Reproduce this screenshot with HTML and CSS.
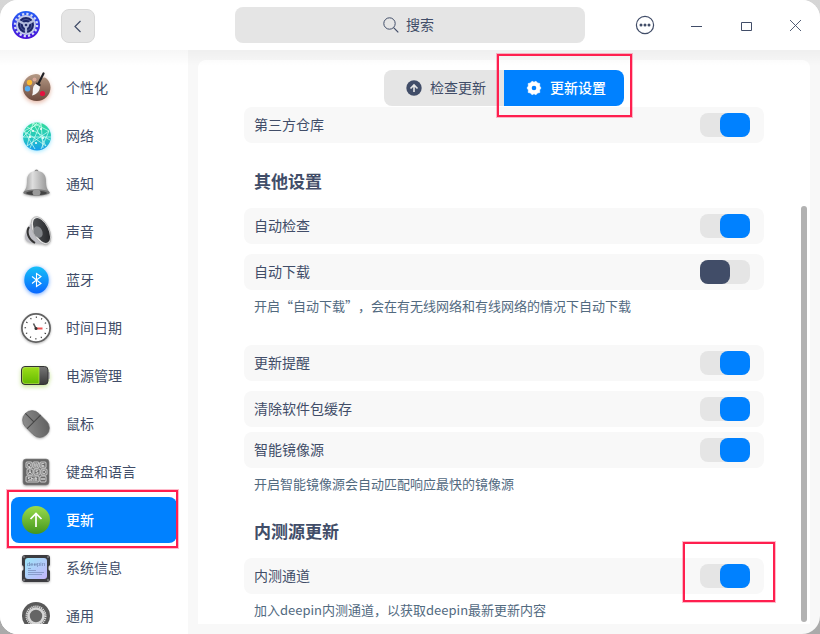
FILE: index.html
```html
<!DOCTYPE html>
<html lang="zh-CN">
<head>
    <meta charset="UTF-8">
    <meta name="viewport" content="width=device-width, initial-scale=1.0">
    <title>控制中心</title>
    <link rel="stylesheet" href="styles.css">
</head>
<body>
    <div class="window">
        <header class="titlebar">
            <div class="titlebar-left">
                <svg class="logo" viewBox="0 0 28 28" aria-hidden="true">
                    <defs>
                        <linearGradient id="logoBlue" x1="0" y1="0" x2="0" y2="1"><stop offset="0" stop-color="#2460f5"/><stop offset="1" stop-color="#4a10d8"/></linearGradient>
                    </defs>
                    <circle cx="14" cy="14" r="14" fill="url(#logoBlue)"/>
                    <circle cx="14" cy="14" r="11" fill="none" stroke="#d5dcf5" stroke-width="2.4" stroke-dasharray="2.2 2.12"/>
                    <circle cx="14" cy="14" r="9" fill="#1c2568" stroke="#c3cbec" stroke-width="2"/>
                    <circle cx="14" cy="14" r="5.6" fill="none" stroke="#4a5593" stroke-width="1"/>
                    <path d="M14 14L6 9.5M14 14L22 9.5M14 14V23" stroke="#b3bbdc" stroke-width="2.2"/>
                    <circle cx="14" cy="14" r="3" fill="#b3bbdc"/>
                    <circle cx="14" cy="14" r="1.3" fill="#28306e"/>
                </svg>
                <button class="back-btn" type="button" aria-label="返回">
                    <svg width="16" height="16" viewBox="0 0 16 16"><path d="M10.500 3L5 8.500L10.500 14" fill="none" stroke="#414d68" stroke-width="1.2"/></svg>
                </button>
            </div>
            <label class="search">
                <svg width="16" height="16" viewBox="0 0 16 16" aria-hidden="true"><circle cx="6.500" cy="6.500" r="5.700" fill="none" stroke="#414d68"/><path d="M10.600 10.600L15.300 15.300" stroke="#414d68" stroke-width="1.200"/></svg>
                <input type="text" placeholder="搜索" aria-label="搜索">
            </label>
            <div class="titlebar-right">
                <button type="button" aria-label="菜单">
                    <svg width="20" height="20" viewBox="0 0 20 20"><circle cx="10" cy="10" r="8.600" fill="none" stroke="#414d68" stroke-width="1.200"/><g fill="#414d68"><circle cx="6" cy="10" r="1.500"/><circle cx="10" cy="10" r="1.500"/><circle cx="14" cy="10" r="1.500"/></g></svg>
                </button>
                <button type="button" aria-label="最小化">
                    <svg width="14" height="14" viewBox="0 0 14 14"><path d="M3 8.500H14" stroke="#414d68"/></svg>
                </button>
                <button type="button" aria-label="最大化">
                    <svg width="14" height="14" viewBox="0 0 14 14"><path d="M3.500 4.500H13.500V12.500H3.500Z" fill="none" stroke="#414d68"/></svg>
                </button>
                <button type="button" aria-label="关闭">
                    <svg width="14" height="14" viewBox="0 0 14 14"><path d="M2 2L13 13M13 2L2 13" stroke="#414d68" stroke-width="0.9"/></svg>
                </button>
            </div>
        </header>

        <div class="content">
            <nav class="sidebar">
                <a class="nav-item" href="#personalization">
                    <svg class="nav-icon shadow-brown" viewBox="0 0 30 30">
                        <defs><linearGradient id="palette" x1="0" y1="0" x2="0" y2="1"><stop offset="0" stop-color="#b59a86"/><stop offset="1" stop-color="#6c4a3d"/></linearGradient></defs>
                        <path d="M15 1C22 1 17 6 22 5C25 3 29.500 9 29.500 14.500A13.800 13.500 0 1 1 15 1Z" fill="url(#palette)"/>
                        <circle cx="8.500" cy="9.500" r="2.700" fill="#f9b934"/>
                        <circle cx="13.500" cy="6.500" r="2" fill="#d9a99b"/>
                        <circle cx="6.500" cy="15.700" r="2.700" fill="#55adf2"/>
                        <circle cx="21.500" cy="20.500" r="2.600" fill="#e3123f"/>
                        <path d="M22.500 0.500L17 11.500" stroke="#202024" stroke-width="2.200" stroke-linecap="round"/>
                        <path d="M15 10.500L19 13C19 18 16 21.500 11 22.500C13 19 10 14 15 10.500Z" fill="#f3f3f3"/>
                        <path d="M15.200 10L19.500 12.700" stroke="#29292c" stroke-width="2"/>
                    </svg>
                    <span>个性化</span>
                </a>
                <a class="nav-item" href="#network">
                    <svg class="nav-icon shadow-cyan" viewBox="0 0 30 30">
                        <defs><linearGradient id="globe" x1="0" y1="0" x2="0" y2="1"><stop offset="0" stop-color="#32dc9a"/><stop offset="0.6" stop-color="#24c4c4"/><stop offset="1" stop-color="#169ced"/></linearGradient></defs>
                        <circle cx="16" cy="15.500" r="14" fill="url(#globe)"/>
                        <path d="M12 2L6 25M12 2L25 25M12 2L28 10M20 2L3 10M20 2L9 27M20 2L22 27M3 10L25 25M3 10L14 28M2 16H30M28 10L6 25M28 10L20 28M6 6L29 19M16 2L2 16" fill="none" stroke="#d4fff3" stroke-width="0.7"/>
                        <g fill="#fff"><circle cx="12" cy="10" r="1"/><circle cx="20" cy="8" r="1"/><circle cx="22" cy="17" r="1"/><circle cx="9" cy="16" r="1"/><circle cx="15" cy="22" r="1"/></g>
                    </svg>
                    <span>网络</span>
                </a>
                <a class="nav-item" href="#notification">
                    <svg class="nav-icon shadow-gray" viewBox="0 0 30 30">
                        <defs><linearGradient id="bell" x1="0" y1="0" x2="1" y2="0"><stop offset="0" stop-color="#929292"/><stop offset="0.35" stop-color="#dedede"/><stop offset="1" stop-color="#8c8c8c"/></linearGradient></defs>
                        <circle cx="15.500" cy="2.500" r="2" fill="#8c8c8c"/>
                        <path d="M15.500 2C22 2 25 6 25 11.500C25 18 26 20 28.500 23V24.500H2.500V23C5 20 6 18 6 11.500C6 6 9 2 15.500 2Z" fill="url(#bell)"/>
                        <ellipse cx="15.500" cy="23.500" rx="13" ry="3.200" fill="#777"/>
                        <ellipse cx="15.500" cy="24" rx="10.500" ry="2.200" fill="#434343"/>
                        <ellipse cx="15.500" cy="23.600" rx="4" ry="3.200" fill="#9a9a9a"/>
                    </svg>
                    <span>通知</span>
                </a>
                <a class="nav-item" href="#sound">
                    <svg class="nav-icon shadow-gray" viewBox="0 0 30 30">
                        <defs><linearGradient id="cone" x1="0" y1="0" x2="1" y2="1"><stop offset="0" stop-color="#55585b"/><stop offset="1" stop-color="#202124"/></linearGradient></defs>
                        <path d="M6 12L4 18C3 23 7 26 12 26L22 27L12 4Z" fill="#bdbdc3"/>
                        <path d="M8 10C5 15 7 22 14 26" fill="none" stroke="#333" stroke-width="2"/>
                        <ellipse cx="20" cy="13.500" rx="8" ry="15" transform="rotate(-27 20 13.500)" fill="#e8e8e8" stroke="#a2a2a2" stroke-width="0.600"/>
                        <ellipse cx="20.500" cy="13.500" rx="6.700" ry="13.500" transform="rotate(-27 20.500 13.500)" fill="url(#cone)"/>
                        <ellipse cx="17" cy="15" rx="4.300" ry="6" transform="rotate(-27 17 15)" fill="#808387"/>
                    </svg>
                    <span>声音</span>
                </a>
                <a class="nav-item" href="#bluetooth">
                    <svg class="nav-icon shadow-blue" viewBox="0 0 30 30">
                        <defs><linearGradient id="bt" x1="0" y1="0" x2="0" y2="1"><stop offset="0" stop-color="#14bff8"/><stop offset="1" stop-color="#0968ff"/></linearGradient></defs>
                        <ellipse cx="15.500" cy="15" rx="12.200" ry="13.400" fill="url(#bt)"/>
                        <path d="M11 11.500L20 18.500L15.500 21.500V8.500L20 11.500L11 18.500" fill="none" stroke="#fff" stroke-width="1.100"/>
                    </svg>
                    <span>蓝牙</span>
                </a>
                <a class="nav-item" href="#datetime">
                    <svg class="nav-icon shadow-gray" viewBox="0 0 30 30">
                        <circle cx="15" cy="15" r="14.100" fill="#fff" stroke="#626262" stroke-width="1.700"/>
                        <circle cx="15" cy="15" r="10.700" fill="none" stroke="#333" stroke-width="1.500" stroke-dasharray="1 4.602" stroke-dashoffset="0.500"/>
                        <path d="M15 15.500H21.500" stroke="#f05252" stroke-width="2"/>
                        <path d="M12.500 10.500L15 15.500" stroke="#555" stroke-width="1.600"/>
                        <circle cx="15" cy="15.500" r="1.500" fill="#333"/>
                    </svg>
                    <span>时间日期</span>
                </a>
                <a class="nav-item" href="#power">
                    <svg class="nav-icon shadow-green" viewBox="0 0 30 30">
                        <defs>
                            <linearGradient id="charge" x1="0" y1="0" x2="0" y2="1"><stop offset="0" stop-color="#9bdd19"/><stop offset="1" stop-color="#65bb00"/></linearGradient>
                            <linearGradient id="battery" x1="0" y1="0" x2="0" y2="1"><stop offset="0" stop-color="#777"/><stop offset="1" stop-color="#393939"/></linearGradient>
                        </defs>
                        <rect x="26" y="11" width="3" height="7" rx="1" fill="#bbb"/>
                        <rect x="0.500" y="5.500" width="26.500" height="18" rx="3.500" fill="url(#battery)" stroke="#333"/>
                        <path d="M4 6.500H18V22.500H4Q1.500 22.500 1.500 20V9Q1.500 6.500 4 6.500Z" fill="url(#charge)" stroke="#b8ee45" stroke-width="0.700"/>
                    </svg>
                    <span>电源管理</span>
                </a>
                <a class="nav-item" href="#mouse">
                    <svg class="nav-icon shadow-gray" viewBox="0 0 30 30">
                        <defs><linearGradient id="mouse" x1="0" y1="0" x2="1" y2="1"><stop offset="0" stop-color="#929292"/><stop offset="1" stop-color="#5b5b5b"/></linearGradient></defs>
                        <g transform="rotate(-45 15 15)">
                            <rect x="5.500" y="0" width="19" height="30" rx="9.500" fill="url(#mouse)" stroke="#666" stroke-width="0.600"/>
                            <path d="M5.500 12H24.500M15 12V0" fill="none" stroke="#454545" stroke-width="1"/>
                        </g>
                    </svg>
                    <span>鼠标</span>
                </a>
                <a class="nav-item" href="#keyboard">
                    <svg class="nav-icon shadow-gray" viewBox="0 0 30 30">
                        <rect x="2" y="2" width="26" height="26" rx="3" fill="#666" stroke="#858585" stroke-width="0.600"/>
                        <g fill="#6b6b6b" stroke="#e6e6e6" stroke-width="0.800">
                            <rect x="5" y="5" width="6" height="6" rx="1"/><rect x="12" y="5" width="6" height="6" rx="1"/><rect x="19" y="5" width="6" height="6" rx="1"/>
                            <rect x="6" y="12" width="6" height="6" rx="1"/><rect x="13" y="12" width="6" height="6" rx="1"/><rect x="20" y="12" width="6" height="6" rx="1"/>
                            <rect x="5" y="19" width="13" height="6" rx="1"/><rect x="19" y="19" width="6" height="6" rx="1"/>
                        </g>
                        <g class="key-text" fill="#fff"><text x="8" y="10">Q</text><text x="15" y="10">W</text><text x="22" y="10">E</text><text x="9" y="17">A</text><text x="16" y="17">S</text><text x="23" y="17">D</text><text x="11.500" y="24">Shift</text></g>
                        <path d="M20 22H24" stroke="#fff"/>
                    </svg>
                    <span>键盘和语言</span>
                </a>
                <a class="nav-item active marked" href="#update" aria-current="page">
                    <svg class="nav-icon" viewBox="0 0 30 30">
                        <defs><linearGradient id="green" x1="0" y1="0" x2="0" y2="1"><stop offset="0" stop-color="#9bdc4d"/><stop offset="1" stop-color="#42951d"/></linearGradient></defs>
                        <circle cx="15" cy="15" r="14" fill="url(#green)"/>
                        <path d="M15 22V9M9.500 14L15 8.500L20.500 14" fill="none" stroke="#fff" stroke-width="1.700"/>
                    </svg>
                    <span>更新</span>
                </a>
                <a class="nav-item" href="#systeminfo">
                    <svg class="nav-icon shadow-gray" viewBox="0 0 30 30">
                        <defs><linearGradient id="screen" x1="0" y1="0" x2="1" y2="1"><stop offset="0" stop-color="#9ce6f8"/><stop offset="1" stop-color="#c5b4fb"/></linearGradient></defs>
                        <path d="M4 2H26Q29 2 29 5V12L27.500 13.500V16.500L29 18V26Q29 29 26 29H4Q1 29 1 26V18L2.500 16.500V13.500L1 12V5Q1 2 4 2Z" fill="#3c3c40"/>
                        <rect x="4" y="5" width="22" height="21" rx="3" fill="url(#screen)"/>
                        <g fill="#aaa"><circle cx="3" cy="4" r="0.800"/><circle cx="27" cy="4" r="0.800"/><circle cx="3" cy="27" r="0.800"/><circle cx="27" cy="27" r="0.800"/></g>
                        <text class="chip-text" x="15" y="12.500">deepin</text>
                        <path d="M7 15.500H10M7 17.500H15M7 19.500H23M7 21.500H21" stroke="#7e91bf" stroke-width="0.800"/>
                    </svg>
                    <span>系统信息</span>
                </a>
                <a class="nav-item" href="#general">
                    <svg class="nav-icon" viewBox="0 0 30 30">
                        <circle cx="15" cy="15" r="14" fill="#595959"/>
                        <circle cx="15" cy="15" r="9.500" fill="none" stroke="#ddd" stroke-width="2" stroke-dasharray="1.200 0.790"/>
                        <circle cx="15" cy="15" r="7.500" fill="#656565" stroke="#d5d5d5" stroke-width="2.600"/>
                    </svg>
                    <span>通用</span>
                </a>
            </nav>

            <main class="panel">
                <div class="tabs">
                    <button class="tab" type="button">
                        <svg width="16" height="16" viewBox="0 0 16 16"><circle cx="8" cy="8" r="7.700" fill="#414d68"/><path d="M8 12V5.500M4.500 8.500L8 5L11.500 8.500" fill="none" stroke="#e5e5e5" stroke-width="1.600"/></svg>
                        <span>检查更新</span>
                    </button>
                    <button class="tab active marked" type="button">
                        <svg width="16" height="16" viewBox="0 0 16 16"><path d="M6 1.200L8 2.200L10 1.200L11.500 3L13.800 3.500L13.600 6L15 8L13.600 10L13.800 12.500L11.500 13L10 14.800L8 13.800L6 14.800L4.500 13L2.200 12.500L2.400 10L1 8L2.400 6L2.200 3.500L4.500 3Z" fill="#fff" stroke="#fff" stroke-linejoin="round" stroke-width="0.600"/><circle cx="8" cy="8" r="2.300" fill="#0081ff"/></svg>
                        <span>更新设置</span>
                    </button>
                </div>

                <label class="row"><span>第三方仓库</span> <input class="switch" type="checkbox" checked></label>

                <h2>其他设置</h2>
                <label class="row"><span>自动检查</span> <input class="switch" type="checkbox" checked></label>
                <label class="row spaced"><span>自动下载</span> <input class="switch" type="checkbox"></label>
                <p class="note">开启“自动下载”，会在有无线网络和有线网络的情况下自动下载</p>

                <div class="group">
                    <label class="row"><span>更新提醒</span> <input class="switch" type="checkbox" checked></label>
                    <label class="row spaced"><span>清除软件包缓存</span> <input class="switch" type="checkbox" checked></label>
                    <label class="row tight"><span>智能镜像源</span> <input class="switch" type="checkbox" checked></label>
                    <p class="note">开启智能镜像源会自动匹配响应最快的镜像源</p>
                </div>

                <h2>内测源更新</h2>
                <label class="row marked"><span>内测通道</span> <input class="switch" type="checkbox" checked></label>
                <p class="note">加入deepin内测通道，以获取deepin最新更新内容</p>
                <div class="scrollbar"></div>
            </main>
        </div>
    </div>
</body>
</html>
```
FILE: styles.css
```css
*, *::before, *::after {
    box-sizing: border-box;
}
body {
    margin: 0;
    background: linear-gradient(#d6d6d6, #aaaaaa);
    color: #414d68;
    font-family: "Noto Sans CJK SC", "Noto Sans", sans-serif;
    font-size: 14px;
    line-height: 20px;
    text-spacing-trim: space-all;
}
button, input {
    font: inherit;
    color: inherit;
}
button {
    display: flex;
    align-items: center;
    justify-content: center;
    padding: 0;
    border: none;
    background: none;
    cursor: pointer;
}
.window {
    display: flex;
    flex-direction: column;
    height: 100vh;
    border-radius: 18px;
    overflow: hidden;
    background: #f8f8f8;
}

/* title bar */
.titlebar {
    display: grid;
    grid-template-columns: 1fr minmax(0, 350px) 1fr;
    align-items: center;
    height: 50px;
    flex-shrink: 0;
    background: #fff;
}
.titlebar-left {
    display: flex;
    align-items: center;
    gap: 21px;
    padding-left: 12px;
}
.logo {
    width: 28px;
    height: 28px;
}
.back-btn {
    width: 34px;
    height: 34px;
    margin-top: 2px;
    border: 1px solid #d8d8d8;
    border-radius: 8px;
    background: #e5e5e5;
}
.search {
    display: flex;
    align-items: center;
    justify-content: center;
    gap: 7px;
    height: 36px;
    padding-right: 3px;
    border-radius: 8px;
    background: #e5e5e5;
}
.search input {
    field-sizing: content;
    padding: 0 0 2px;
    border: none;
    outline: none;
    background: none;
}
.search input::placeholder {
    color: #414d68;
    opacity: 1;
}
.titlebar-right {
    display: flex;
    justify-content: flex-end;
}
.titlebar-right button {
    width: 50px;
    height: 50px;
}

.content {
    display: grid;
    grid-template-columns: 188px 1fr;
    flex: 1;
    min-height: 0;
    position: relative;
}
/* shadow that the title bar drops on both columns */
.content::after {
    content: "";
    position: absolute;
    top: 0;
    left: 0;
    right: 0;
    height: 16px;
    background: linear-gradient(rgba(0, 0, 0, 0.035), transparent);
    pointer-events: none;
}

/* sidebar */
.sidebar {
    display: flex;
    flex-direction: column;
    gap: 2px;
    padding: 15px 11px 0;
    overflow: hidden;
    background: #fff;
    border-bottom: 10px solid #fff;
}
.nav-item {
    display: flex;
    align-items: center;
    gap: 15px;
    height: 46px;
    flex-shrink: 0;
    padding-left: 10px;
    border-radius: 8px;
    color: #414d68;
    text-decoration: none;
}
.nav-item span, .row span, .tab span {
    padding-bottom: 2px;
}
.nav-item.active {
    background: #0081ff;
    color: #fff;
    font-weight: 500;
}
.nav-icon {
    width: 30px;
    height: 30px;
    overflow: visible;
}
.shadow-gray {
    filter: drop-shadow(0 1px 1px rgba(0, 0, 0, 0.3));
}
.shadow-brown {
    filter: drop-shadow(0 2px 2px rgba(190, 80, 40, 0.4));
}
.shadow-cyan {
    filter: drop-shadow(0 1px 2px rgba(0, 190, 255, 0.4));
}
.shadow-blue {
    filter: drop-shadow(0 1px 2px rgba(0, 100, 255, 0.6));
}
.shadow-green {
    filter: drop-shadow(0 2px 2px rgba(120, 190, 0, 0.4));
}
.key-text {
    font-family: "Liberation Sans", sans-serif;
    font-size: 5px;
    text-anchor: middle;
}
.chip-text {
    font-family: "Liberation Sans", sans-serif;
    font-size: 6px;
    text-anchor: middle;
    fill: #667ba8;
}

/* settings panel */
.panel {
    position: relative;
    margin: 10px;
    padding: 10px 46px 0;
    border-radius: 8px 8px 0 0;
    background: #fff;
}
.tabs {
    display: flex;
    justify-content: center;
    margin-bottom: 1px;
}
.tab {
    justify-content: flex-start;
    gap: 8px;
    width: 120px;
    height: 36px;
    padding-left: 22px;
    border-radius: 8px 0 0 8px;
    background: #e5e5e5;
}
.tab.active {
    border-radius: 0 8px 8px 0;
    background: #0081ff;
    color: #fff;
    font-weight: 500;
}
.row {
    display: flex;
    align-items: center;
    justify-content: space-between;
    height: 36px;
    padding: 0 14px 0 10px;
    border-radius: 8px;
    background: #f8f8f8;
}
.row.spaced {
    margin-top: 10px;
}
.row.tight {
    margin-top: 5px;
}
.group {
    margin-top: 30px;
}
h2 {
    margin: 25px 10px 14px;
    font-size: 17px;
    line-height: 26px;
    font-weight: 700;
}
.note {
    margin: 7px 10px 0;
    color: #526a7f;
    font-size: 13px;
    line-height: 18px;
}
.switch {
    appearance: none;
    width: 50px;
    height: 24px;
    margin: 0;
    border-radius: 8px;
    background: #e5e5e5;
    cursor: pointer;
}
.switch::before {
    content: "";
    display: block;
    width: 30px;
    height: 24px;
    border-radius: 8px;
    background: #414d68;
}
.switch:checked::before {
    margin-left: 20px;
    background: #0081ff;
}
.scrollbar {
    position: absolute;
    top: 146px;
    right: 3px;
    bottom: 2px;
    width: 6px;
    border-radius: 3px;
    background: #b2b2b2;
}

/* red highlight frames */
.marked {
    position: relative;
}
.marked::after {
    content: "";
    position: absolute;
    z-index: 1;
    border: 2px solid #ff1f4f;
    box-shadow: 0 0 0 1px rgba(255, 31, 79, 0.3);
    pointer-events: none;
}
.nav-item.marked::after {
    inset: -7px -1px -5px -4px;
}
.tab.marked::after {
    inset: -16px -8px -11px -7px;
}
.row.marked::after {
    top: -16px;
    right: -11px;
    bottom: -8px;
    width: 92px;
}
```
